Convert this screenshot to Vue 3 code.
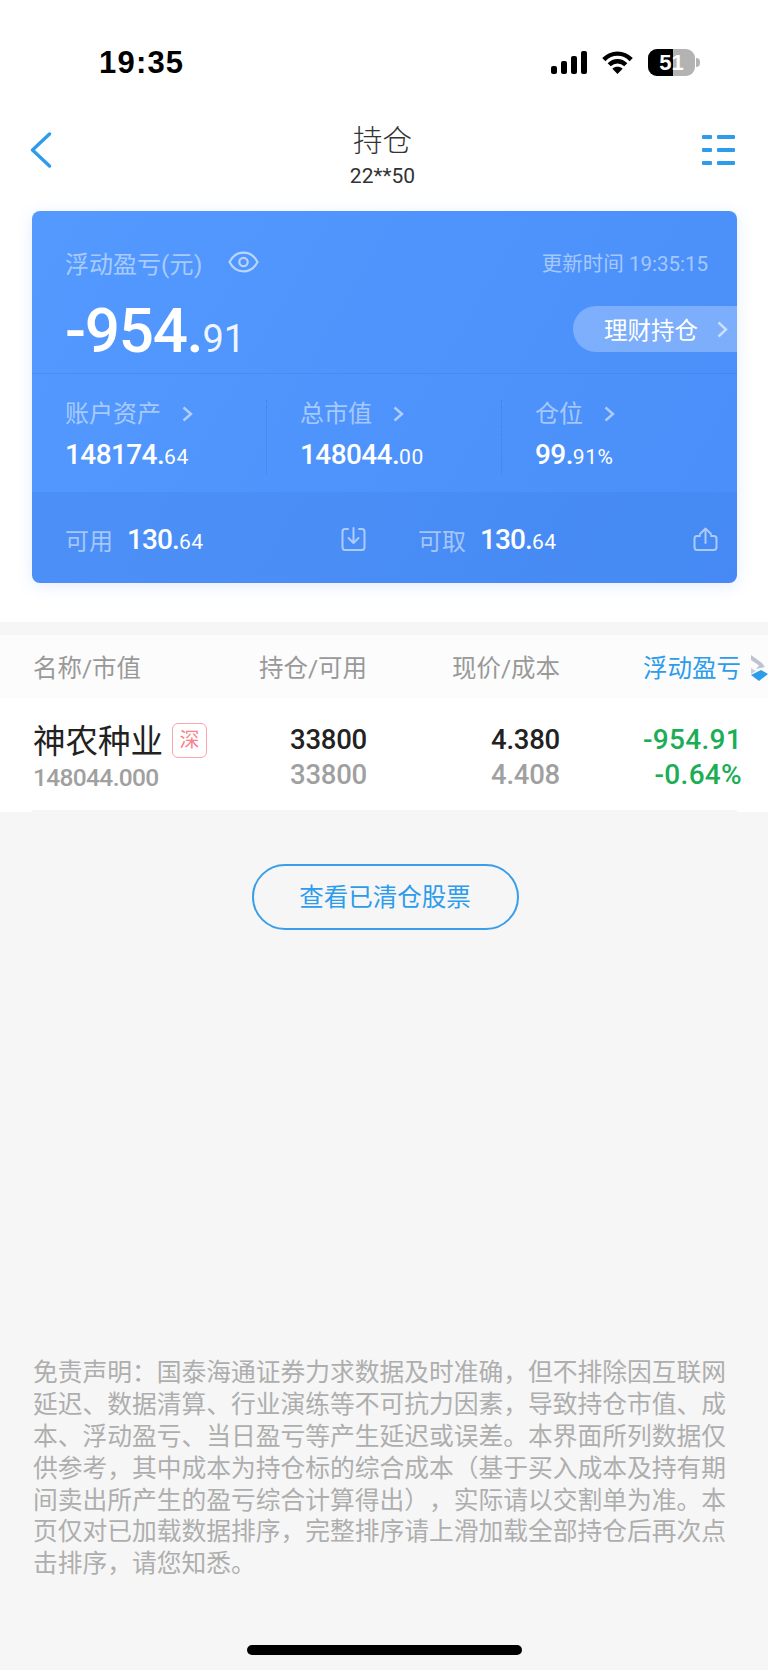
<script setup>
const stats = [
  { label: '账户资产', int: '148174.', dec: '64' },
  { label: '总市值', int: '148044.', dec: '00' },
  { label: '仓位', int: '99.', dec: '91%' }
]
const disclaimer = '免责声明：国泰海通证券力求数据及时准确，但不排除因互联网延迟、数据清算、行业演练等不可抗力因素，导致持仓市值、成本、浮动盈亏、当日盈亏等产生延迟或误差。本界面所列数据仅供参考，其中成本为持仓标的综合成本（基于买入成本及持有期间卖出所产生的盈亏综合计算得出），实际请以交割单为准。本页仅对已加载数据排序，完整排序请上滑加载全部持仓后再次点击排序，请您知悉。'
</script>

<template>
  <div class="page">
    <div class="top">
      <div class="status">
        <span class="time">19:35</span>
        <div class="status-icons">
          <svg width="36" height="23" viewBox="0 0 36 23" fill="#000">
            <rect x="0" y="15" width="6" height="8" rx="2" />
            <rect x="10" y="10" width="6" height="13" rx="2" />
            <rect x="20" y="5" width="6" height="18" rx="2" />
            <rect x="30" y="0" width="6" height="23" rx="2" />
          </svg>
          <svg class="wifi" width="31" height="23" viewBox="0 0 31 23" fill="none" stroke="#000" stroke-width="4.4">
            <path d="M1.8 8.6 C9.5 .6 21.5 .6 29.2 8.6" />
            <path d="M7.2 13.8 C12 9 19 9 23.8 13.8" />
            <path d="M15.5 23 L10.4 17.8 C13 15.2 18 15.2 20.6 17.8 Z" fill="#000" stroke="none" />
          </svg>
          <div class="battery">
            <div class="batt-body"><div class="batt-fill"></div><span class="batt-num">51</span></div>
            <div class="batt-nub"></div>
          </div>
        </div>
      </div>
      <div class="nav">
        <svg class="back" width="22" height="36" viewBox="0 0 22 36" fill="none" stroke="#2d9cec" stroke-width="3.4" stroke-linecap="round" stroke-linejoin="round">
          <path d="M19.5 2 L2.5 18 L19.5 34" />
        </svg>
        <div class="nav-title">
          <div class="title">持仓</div>
          <div class="account">22**50</div>
        </div>
        <svg class="menu" width="33" height="30" viewBox="0 0 33 30" fill="#2d9cec">
          <rect x="0" y="0" width="10" height="4" rx="1" /><rect x="15" y="0" width="18" height="4" rx="1" />
          <rect x="0" y="13" width="10" height="4" rx="1" /><rect x="15" y="13" width="18" height="4" rx="1" />
          <rect x="0" y="26" width="10" height="4" rx="1" /><rect x="15" y="26" width="18" height="4" rx="1" />
        </svg>
      </div>
      <div class="card">
        <div class="card-head">
          <div class="head-row">
            <div class="pl-label">
              <span>浮动盈亏</span><span class="paren">(元)</span>
              <svg class="eye" width="31" height="22" viewBox="0 0 31 22" fill="none" stroke="rgba(255,255,255,.6)" stroke-width="2.2">
                <path d="M1.5 11 C8 -1.5 23 -1.5 29.5 11 C23 23.5 8 23.5 1.5 11 Z" />
                <circle cx="15.5" cy="11" r="4.2" />
              </svg>
            </div>
            <div class="updated">更新时间 19:35:15</div>
          </div>
          <div class="amount-row">
            <div class="amount"><span class="amount-int">-954.</span><span class="amount-dec">91</span></div>
            <div class="wealth">
              <span>理财持仓</span>
              <svg width="11" height="17" viewBox="0 0 11 17" fill="none" stroke="rgba(255,255,255,.6)" stroke-width="2.4"><path d="M1.5 1.5 L9 8.5 L1.5 15.5" /></svg>
            </div>
          </div>
        </div>
        <div class="stats">
          <div v-for="s in stats" :key="s.label" class="stat">
            <div class="stat-label">
              <span>{{ s.label }}</span>
              <svg width="11" height="16" viewBox="0 0 11 16" fill="none" stroke="rgba(255,255,255,.55)" stroke-width="2.4"><path d="M1.5 1.5 L9 8 L1.5 14.5" /></svg>
            </div>
            <div class="stat-value">{{ s.int }}<span class="small">{{ s.dec }}</span></div>
          </div>
        </div>
        <div class="funds">
          <div class="fund">
            <span class="fund-label">可用</span>
            <span class="fund-value">130.<span class="small">64</span></span>
            <svg class="fund-icon" width="25" height="24" viewBox="0 0 25 24" fill="none" stroke="rgba(255,255,255,.55)" stroke-width="2" stroke-linecap="round" stroke-linejoin="round">
              <path d="M7 2 H4 Q1.5 2 1.5 4.5 V20 Q1.5 23 4 23 H21 Q23.5 23 23.5 20 V4.5 Q23.5 2 21 2 H18" />
              <path d="M12.5 1 V15 M7.5 11 L12.5 16 L17.5 11" />
            </svg>
          </div>
          <div class="fund">
            <span class="fund-label">可取</span>
            <span class="fund-value">130.<span class="small">64</span></span>
            <svg class="fund-icon" width="25" height="24" viewBox="0 0 25 24" fill="none" stroke="rgba(255,255,255,.55)" stroke-width="2" stroke-linecap="round" stroke-linejoin="round">
              <path d="M7 9 H4 Q1.5 9 1.5 11.5 V20 Q1.5 23 4 23 H21 Q23.5 23 23.5 20 V11.5 Q23.5 9 21 9 H18" />
              <path d="M12.5 16 V1.5 M7 7 L12.5 1.5 L18 7" />
            </svg>
          </div>
        </div>
      </div>
    </div>

    <div class="table">
      <div class="thead">
        <span class="col-name">名称/市值</span>
        <span class="col-num col-qty">持仓/可用</span>
        <span class="col-num col-price">现价/成本</span>
        <span class="col-num col-pl active">浮动盈亏</span>
        <svg class="sort" width="18" height="26" viewBox="0 0 18 26">
          <path d="M1 0 L12 8 L15 12 L6 14 L9 10.5 L1 5 Z" fill="#bcc5cf" />
          <path d="M1 13 L6 16 L1 19 Z" fill="#c7ced6" />
          <path d="M1 20 L11 15 L18 19 L9 26 Z" fill="#2d9cec" />
        </svg>
      </div>
      <div class="trow">
        <div class="col-name">
          <div class="stock">
            <span class="stock-name">神农种业</span><span class="tag">深</span>
          </div>
          <div class="sub">148044.000</div>
        </div>
        <div class="col-num col-qty"><div class="v1">33800</div><div class="v2">33800</div></div>
        <div class="col-num col-price"><div class="v1">4.380</div><div class="v2">4.408</div></div>
        <div class="col-num col-pl green"><div class="v1">-954.91</div><div class="v2">-0.64%</div></div>
      </div>
    </div>

    <div class="cleared-wrap"><div class="cleared">查看已清仓股票</div></div>
    <div class="spacer"></div>
    <p class="disclaimer">{{ disclaimer }}</p>
    <div class="home-wrap"><div class="home"></div></div>
  </div>
</template>

<style>
html, body { margin: 0; padding: 0; background: #f6f6f6; }
</style>

<style scoped>
* { box-sizing: border-box; }
.page {
  width: 768px; height: 1670px; display: flex; flex-direction: column;
  background: #f6f6f6; overflow: hidden;
  font-family: Roboto, "Noto Sans CJK SC", sans-serif;
}
.top { background: #fff; height: 622px; }
.status {
  height: 100px; display: flex; justify-content: space-between; align-items: flex-start;
  padding: 44px 68px 0 99px;
}
.time { font: 600 31px/38px "Liberation Sans", sans-serif; color: #000; letter-spacing: 1.2px; }
.status-icons { display: flex; align-items: flex-start; padding-top: 7px; }
.wifi { margin-left: 15px; }
.battery { display: flex; align-items: center; margin-left: 15px; margin-top: -2px; }
.batt-body { position: relative; width: 47px; height: 27px; border-radius: 9px; background: #b3b3b3; overflow: hidden; }
.batt-fill { width: 25px; height: 100%; background: #000; }
.batt-num { position: absolute; inset: 0; text-align: center; font: 700 22px/27px "Liberation Sans", sans-serif; color: #fff; }
.batt-nub { width: 4px; height: 9px; margin-left: 1px; background: #b3b3b3; border-radius: 0 4px 4px 0; }

.nav { height: 111px; display: grid; grid-template-columns: 1fr auto 1fr; align-items: flex-start; padding: 0 33px 0 30px; }
.back { margin-top: 32px; }
.menu { margin-top: 35px; justify-self: end; }
.nav-title { text-align: center; padding-top: 21px; }
.title { font-size: 29.5px; line-height: 40px; color: #333; font-weight: 300; }
.account { font-size: 21px; line-height: 24px; color: #333; letter-spacing: 0; margin-top: 3px; }

.card {
  width: 705px; height: 372px; margin-left: 32px; border-radius: 8px;
  background: linear-gradient(120deg, #5399fe 0%, #4a8ef9 100%);
  box-shadow: 0 3px 16px rgba(70, 130, 240, .15);
  color: #fff; display: flex; flex-direction: column;
}
.card-head { height: 163px; border-bottom: 1px solid rgba(60, 120, 225, .35); padding: 37px 0 0 33px; }
.head-row { display: flex; justify-content: space-between; align-items: center; height: 28px; padding-right: 29px; }
.pl-label { display: flex; align-items: center; font-size: 24px; color: rgba(255, 255, 255, .5); }
.paren { letter-spacing: .4px; }
.eye { margin-left: 25px; }
.updated { font-size: 20.5px; color: rgba(255, 255, 255, .5); }
.amount-row { display: flex; justify-content: space-between; align-items: flex-start; margin-top: 30px; }
.amount { line-height: 72px; margin-top: -11px; white-space: nowrap; }
.amount-int { font-size: 62px; font-weight: 500; letter-spacing: -1.3px; }
.amount-dec { font-size: 38px; letter-spacing: -.2px; color: rgba(255, 255, 255, .92); }
.wealth {
  width: 164px; height: 46px; border-radius: 23px 0 0 23px; background: rgba(255, 255, 255, .27);
  display: flex; align-items: center; font-size: 23.5px; padding-left: 31px; gap: 19px; color: #fff;
}
.stats { height: 118px; display: grid; grid-template-columns: repeat(3, 235px); padding: 26px 0; }
.stat { padding-left: 33px; border-right: 1px dotted rgba(50, 105, 205, .5); }
.stat:last-child { border-right: 0; }
.stat-label { display: flex; align-items: center; gap: 21px; font-size: 24px; line-height: 28px; color: rgba(255, 255, 255, .5); }
.stat-value { font-size: 28px; line-height: 34px; font-weight: 500; letter-spacing: -.6px; margin-top: 10px; }
.small { font-size: 21px; font-weight: 400; letter-spacing: .6px; }
.funds { height: 91px; background: rgba(50, 110, 215, .16); border-radius: 0 0 8px 8px; display: grid; grid-template-columns: 353px 352px; }
.fund { display: flex; align-items: center; padding-left: 33px; padding-top: 3px; }
.fund-label { font-size: 24px; color: rgba(255, 255, 255, .5); }
.fund-value { font-size: 28px; font-weight: 500; letter-spacing: -.9px; margin-left: 14px; }
.fund-icon { margin-left: auto; margin-right: 19px; }

.table { margin-top: 13px; }
.thead { height: 63px; background: #fcfcfc; display: flex; align-items: center; font-size: 24.5px; color: #999; position: relative; }
.col-name { width: 235px; padding-left: 33px; flex: none; }
.col-num { text-align: right; flex: none; }
.col-qty { width: 132px; }
.col-price { width: 193px; }
.col-pl { width: 181px; }
.active { color: #2d9cec; }
.sort { position: absolute; left: 750px; top: 20px; }
.trow { height: 114px; background: #fff; display: flex; align-items: flex-start; padding-top: 24px; position: relative; }
.trow::after { content: ""; position: absolute; left: 32px; right: 31px; bottom: 0; height: 2px; background: #f6f6f6; }
.stock { display: flex; align-items: center; height: 46px; margin-top: -3px; }
.stock-name { font-size: 32.5px; line-height: 46px; color: #222; }
.tag {
  width: 35px; height: 35px; margin-left: 9px; margin-top: -4px; border: 1px solid #fda4ad; border-radius: 6px;
  color: #fb7f8c; font-size: 20px; line-height: 33px; text-align: center;
}
.sub { font-size: 24.5px; line-height: 30px; font-weight: 500; color: #a0a0a0; letter-spacing: -.65px; margin-top: -2px; }
.v1, .v2 { font-size: 27.5px; line-height: 35px; font-weight: 500; letter-spacing: -.25px; }
.v1 { color: #222; }
.v2 { color: #a0a0a0; }
.trow .green { width: 182px; }
.green .v1, .green .v2 { color: #1bae56; font-size: 28px; letter-spacing: .3px; }

.cleared-wrap { display: flex; justify-content: center; margin-top: 52px; padding-left: 2px; }
.cleared {
  width: 267px; height: 66px; border: 2px solid #3a9ee8; border-radius: 33px;
  text-align: center; line-height: 64px; font-size: 24.5px; color: #2d9cec;
}
.spacer { flex: 1; }
.disclaimer { margin: 0 42px 33px 33px; font-size: 24.75px; line-height: 31.8px; color: #aeaeae; text-spacing-trim: space-all; }
.home-wrap { height: 57px; padding-top: 32px; display: flex; justify-content: center; }
.home { width: 275px; height: 10px; border-radius: 5px; background: #000; }
</style>
